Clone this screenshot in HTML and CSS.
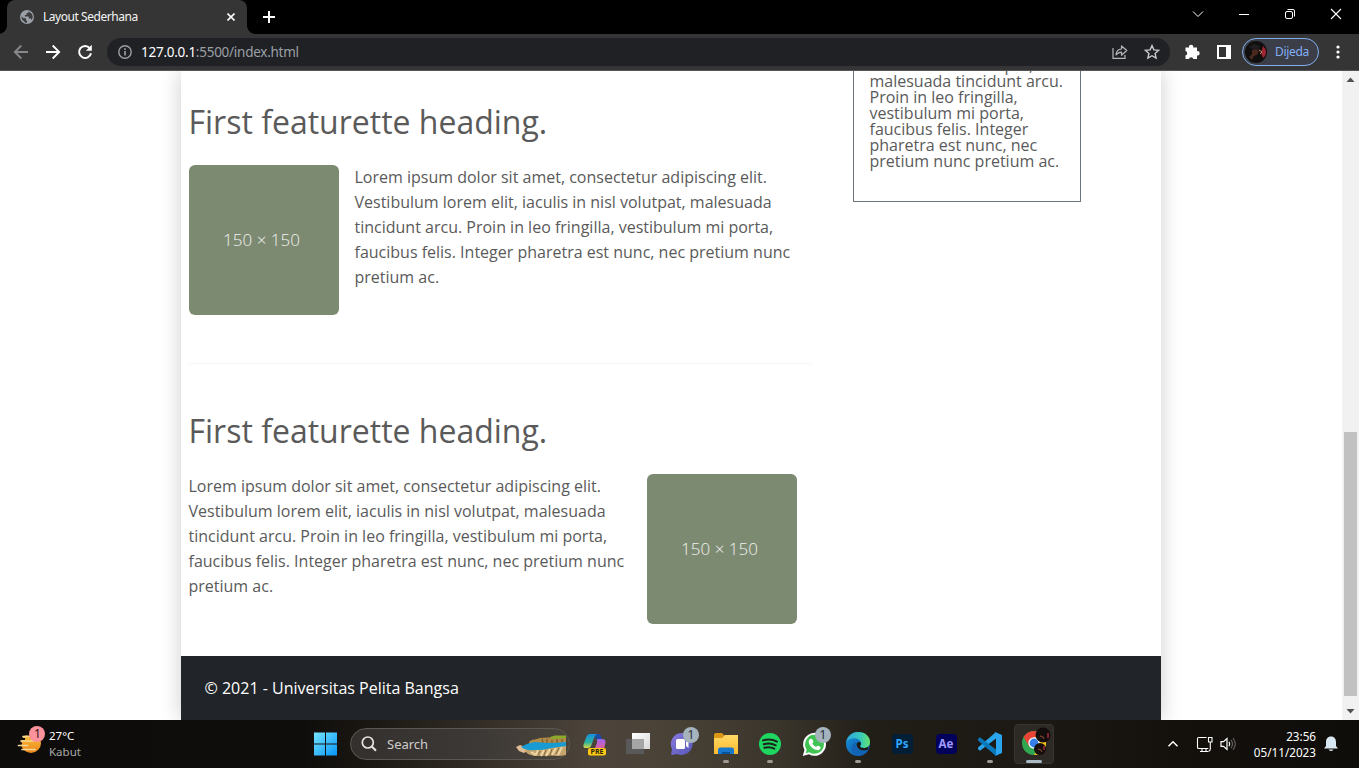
FILE: index.html
```html
<!DOCTYPE html>
<html lang="en">
<head>
<meta charset="utf-8">
<title>Layout Sederhana</title>
<link rel="stylesheet" href="styles.css">
</head>
<body>
<header class="tabstrip">
  <div class="tab">
    <svg class="globe" width="14" height="14" viewBox="0 0 14 14"><circle cx="7" cy="7" r="7" fill="#9aa0a6"/><path d="M1.300 6.200 3.500 8.200H6v2l1 .8v1.800H5.500L2 9.500zM8.500 1.300 8.300 3H6.600v1.900H4.800v1.600h4v1.900h2l1 1.500 1-2.900-.8-3z" fill="#3b3c3e"/></svg>
    <span class="tab-title">Layout Sederhana</span>
    <svg class="tab-close" width="8" height="8" viewBox="0 0 8 8"><path d="m.5.5 7 7m0-7-7 7" stroke="#fff" stroke-width="1.6"/></svg>
  </div>
  <svg class="new-tab" width="12" height="12" viewBox="0 0 12 12"><path d="M6 0v12M0 6h12" stroke="#fff" stroke-width="2"/></svg>
  <div class="window-controls">
    <svg width="12" height="12" viewBox="0 0 12 12"><path d="m1 3.5 5 5 5-5" fill="none" stroke="#fff"/></svg>
    <svg width="12" height="12" viewBox="0 0 12 12"><path d="M1 6.5h10" stroke="#fff"/></svg>
    <svg width="12" height="12" viewBox="0 0 12 12"><rect x="1.5" y="3.5" width="7" height="7" rx="1.5" fill="none" stroke="#fff"/><path d="M3.5 1.5H9A1.5 1.5 0 0 1 10.500 3v5.500" fill="none" stroke="#fff"/></svg>
    <svg width="12" height="12" viewBox="0 0 12 12"><path d="m1 1 10 10m0-10L1 11" stroke="#fff" stroke-width="1.1"/></svg>
  </div>
</header>
<nav class="toolbar">
  <div class="nav-buttons">
    <svg width="16" height="16" viewBox="0 0 16 16" fill="none" stroke="#87888a" stroke-width="1.8"><path d="M15 8H2M8.300 1.500 1.800 8l6.500 6.500"/></svg>
    <svg width="16" height="16" viewBox="0 0 16 16" fill="none" stroke="#fff" stroke-width="1.8"><path d="M1 8h13M7.700 1.500 14.200 8l-6.500 6.500"/></svg>
    <svg width="16" height="16" viewBox="0 0 16 16" fill="none" stroke="#fff" stroke-width="2"><path d="M12.800 4.100A6 6 0 1 0 14 9.200"/><path d="M14.800.8v6H8.900z" fill="#fff" stroke="none"/></svg>
  </div>
  <div class="address">
    <svg width="14" height="14" viewBox="0 0 14 14"><circle cx="7" cy="7" r="6.200" fill="none" stroke="#9aa0a6" stroke-width="1.400"/><path d="M7 6v4.500M7 3.300v1.600" stroke="#9aa0a6" stroke-width="1.600"/></svg>
    <span class="url"><b>127.0.0.1</b>:5500/index.html</span>
    <svg class="share" width="16" height="16" viewBox="0 0 16 16" fill="none" stroke="#b5b8bb" stroke-width="1.200"><path d="M1 4v10.400h12V11"/><path d="M9.500 2v3C6 5.200 4.200 7.500 4 11c1.500-2 3-2.800 5.500-2.800v3L14.800 6.500z" stroke-linejoin="round"/></svg>
    <svg width="16" height="16" viewBox="0 0 16 16"><path d="m8 1.600 1.900 4.300 4.700.5-3.500 3.100 1 4.600L8 11.700l-4.100 2.400 1-4.600-3.500-3.100 4.700-.5z" fill="none" stroke="#c7c9cc" stroke-width="1.400"/></svg>
  </div>
  <svg class="puzzle" width="16" height="16" viewBox="0 0 16 16"><path d="M1.500 3.500H5a2.200 2.200 0 1 1 4.200 0H13v3.700a2.200 2.200 0 1 1 0 4.300V15H9.300a2.200 2.200 0 0 0-4.300 0H1.500v-3.600a2.200 2.200 0 0 0 0-4.300z" fill="#fff"/></svg>
  <svg class="panel" width="14" height="14" viewBox="0 0 14 14"><path fill="#fff" fill-rule="evenodd" d="M0 0h14v14H0zM2 2v10h7V2z"/></svg>
  <div class="profile">
    <svg width="22" height="22" viewBox="0 0 22 22"><circle cx="11" cy="11" r="11" fill="#110e0e"/><path d="M18 5c3 3 4 6 2 10l-2 2-2-5z" fill="#a02534"/><path d="m7 9 4-1 3 2-2 4-3 1-2 4-3-3 3-3z" fill="#49291e"/><path d="m4 6 5-3 6 2-1 4-6-1z" fill="#201d20"/><path d="m14 9 3 2-2 2" stroke="#c78b69" fill="none"/></svg>
    <span>Dijeda</span>
  </div>
  <svg class="menu" width="4" height="16" viewBox="0 0 4 16" fill="#fff"><circle cx="2" cy="3" r="1.600"/><circle cx="2" cy="8" r="1.600"/><circle cx="2" cy="13" r="1.600"/></svg>
</nav>

<div class="viewport">
  <div class="scroll-area">
    <div class="container">
      <div class="columns">
        <main class="main">
          <article class="entry">
            <h2>First featurette heading.</h2>
            <div class="entry-body">
              <div class="thumb">150 × 150</div>
              <p>Lorem ipsum dolor sit amet, consectetur adipiscing elit.<br>Vestibulum lorem elit, iaculis in nisl volutpat, malesuada<br>tincidunt arcu. Proin in leo fringilla, vestibulum mi porta,<br>faucibus felis. Integer pharetra est nunc, nec pretium nunc<br>pretium ac.</p>
            </div>
          </article>
          <hr class="divider">
          <article class="entry">
            <h2>First featurette heading.</h2>
            <div class="entry-body reverse">
              <div class="thumb">150 × 150</div>
              <p>Lorem ipsum dolor sit amet, consectetur adipiscing elit.<br>Vestibulum lorem elit, iaculis in nisl volutpat, malesuada<br>tincidunt arcu. Proin in leo fringilla, vestibulum mi porta,<br>faucibus felis. Integer pharetra est nunc, nec pretium nunc<br>pretium ac.</p>
            </div>
          </article>
        </main>
        <aside class="widget">
          <p>iaculis in nisl volutpat,<br>malesuada tincidunt arcu.<br>Proin in leo fringilla,<br>vestibulum mi porta,<br>faucibus felis. Integer<br>pharetra est nunc, nec<br>pretium nunc pretium ac.</p>
        </aside>
      </div>
      <footer class="footer"><p>© 2021 - Universitas Pelita Bangsa</p></footer>
    </div>
  </div>
  <div class="scrollbar">
    <svg width="17" height="17" viewBox="0 0 17 17"><path d="M4.500 11 8.500 6.500l4 4.500z" fill="#505050"/></svg>
    <div class="track"><div class="thumb-bar"></div></div>
    <svg width="17" height="17" viewBox="0 0 17 17"><path d="m4.500 6 4 4.500 4-4.500z" fill="#505050"/></svg>
  </div>
</div>

<div class="taskbar">
  <div class="weather">
    <svg width="30" height="32" viewBox="0 0 30 32"><defs><linearGradient id="sun" x2="0" y2="1"><stop stop-color="#f9c33c"/><stop offset="1" stop-color="#ee851d"/></linearGradient></defs><circle cx="14" cy="18" r="10" fill="url(#sun)"/><path d="M0 6h14v4.500H0zM0 13h8v2H0zM0 17.500h5v2H0z" fill="#0d0c0b"/><path d="M6 11.500h5M4 16h12M1.500 20.500h9M5 24.500h13" stroke="#f3d994" stroke-width="1.700" stroke-linecap="round"/><circle cx="20" cy="9" r="8" fill="#fb929c"/></svg>
    <span class="weather-count">1</span>
    <div class="weather-text"><span>27°C</span><span class="muted">Kabut</span></div>
  </div>

  <div class="apps">
    <div class="slot"><svg width="24" height="24" viewBox="0 0 24 24"><defs><linearGradient id="win" x2="1" y2="1"><stop stop-color="#75e5ff"/><stop offset="1" stop-color="#0795fb"/></linearGradient></defs><path fill="url(#win)" d="M1 .500h11v11H1zM13 .500h11v11H13zM1 12.500h11v11H1zM13 12.500h11v11H13z"/></svg></div>
    <div class="search">
      <svg width="16" height="16" viewBox="0 0 16 16" fill="none" stroke="#e6e4e2" stroke-width="1.700"><circle cx="6.800" cy="6.500" r="5.500"/><path d="m10.800 10.500 4.200 4.300" stroke-width="2"/></svg>
      <span>Search</span>
      <svg class="doodle" width="52" height="22" viewBox="0 0 52 22"><path d="M13 7q2-3 6-2.500L24 3l8-.5L50 2v9H13z" fill="#b08a48"/><path d="m34 2 5-1.500h11V3L36 4z" fill="#8cab2b"/><path d="m26 4 1 4m4-4v4m5-3v3m5-4v4m5-4v3" stroke="#7c5d2c" stroke-width="1.300"/><path d="m0 12 4-2 5 2 4 3-5 3-5-2z" fill="#e0bd97"/><path d="M8 15 30 12l20-2v10q-8 1.500-14 .5l-18 .5-6-2z" fill="#c5a56c"/><path d="M5 12q6-4 14-5 10 1 18 1l13-1v4l-14 2q-12 3-24 2-5-1-7-3" fill="#189bd3"/><path d="m15 17 5 3m2-5-2 5m8-5-3 6m9-7-4 7m10-8-4 7m10-8-4 8" stroke="#edd6a5" stroke-width="2"/><path d="m24 16-2 4m8-5-2 5m8-6-2 6m9-7-3 6" stroke="#846a42"/></svg>
    </div>
    <div class="slot"><svg width="24" height="24" viewBox="0 0 24 24"><defs><linearGradient id="cpa" x2="0" y2="1"><stop stop-color="#168fe5"/><stop offset=".6" stop-color="#2db39b"/><stop offset="1" stop-color="#dbdd42"/></linearGradient><linearGradient id="cpb" x2="0" y2="1"><stop stop-color="#9c66ed"/><stop offset="1" stop-color="#fb5e83"/></linearGradient></defs><path d="M15 7h5c4 0 4 3 3 6l-2 7H9l2-4h2l2-5z" fill="url(#cpb)"/><path d="M12 2h4c3 0 3 3 4 5h-5c-2 0-2-4-3-5" fill="#174da9"/><path d="M8 2h7q-2 1-3 4l-3 8q-1 2-3 2H4c-3 0-3-2-2-5l2-5c1-3 2-4 4-4" fill="url(#cpa)"/><rect x="6" y="16" width="18" height="7.500" rx="2" fill="#ffc914"/><text x="15" y="22.300" class="pre">PRE</text></svg></div>
    <div class="slot"><svg width="26" height="24" viewBox="0 0 26 24"><defs><linearGradient id="tv" x2="1" y2="1"><stop stop-color="#fff"/><stop offset="1" stop-color="#d7d7d7"/></linearGradient></defs><path d="M1 7h18v15H1z" fill="#595959"/><path d="M7 1h18v16H7z" fill="url(#tv)"/><path d="M7 7h12v10H7z" fill="#a5a5a5"/></svg></div>
    <div class="slot"><svg width="24" height="24" viewBox="0 0 24 24"><defs><linearGradient id="chat" x2="1" y2="1"><stop stop-color="#8b79df"/><stop offset="1" stop-color="#5558b7"/></linearGradient></defs><path d="M12 1a11 11 0 1 1-5 21l-5 1q-1 0-.700-1.500L2 17A11 11 0 0 1 12 1" fill="url(#chat)"/><rect x="6" y="7" width="9" height="10" rx="1.500" fill="#fff"/><path d="m16 10 2.500-2v8L16 14z" fill="#fff"/></svg><span class="badge">1</span></div>
    <div class="slot"><svg width="26" height="24" viewBox="0 0 26 24"><defs><linearGradient id="fold" x2="0" y2="1"><stop stop-color="#ffda67"/><stop offset="1" stop-color="#fcb92c"/></linearGradient></defs><path d="M1 3q0-2 2-2h6l3 3h12v6H1z" fill="#da9716"/><path d="M1 6h8l3-3h13v19H1z" fill="url(#fold)"/><path d="M5 22v-4q0-2.500 2.500-2.500h11q2.500 0 2.500 2.500v4z" fill="#1677cc"/><path d="M9 20h8v2H9z" fill="#075398"/></svg><i class="running"></i></div>
    <div class="slot"><svg width="24" height="24" viewBox="0 0 24 24"><circle cx="12" cy="12" r="11" fill="#1ed760"/><path d="M5 8.400q7.500-2.400 14 1.200M5.700 12.200q6.500-1.900 12 1.100M6.300 15.700q5.500-1.500 10 1" fill="none" stroke="#1c231b" stroke-width="2" stroke-linecap="round"/></svg><i class="running"></i></div>
    <div class="slot"><svg width="25" height="25" viewBox="0 0 25 25"><path d="M12.500.8a11.500 11.500 0 0 1 0 23q-3 0-5.500-1.500L.7 24l1.800-6A11.600 11.600 0 0 1 12.500.8" fill="#fff"/><path d="M12.500 2.800a9.500 9.500 0 0 1 0 19q-3 0-5.200-1.500l-3.700 1 1.100-3.600A9.600 9.600 0 0 1 12.500 2.800" fill="#3fc351"/><path d="m8.500 6.800 1.700.3 1.300 3-1.200 1.500q1.300 2.300 3.800 3.300l1.500-1.500 3 1.500q0 3-3 3.300C11 18 6.500 13 6.700 9.300q.2-1.700 1.800-2.500" fill="#fff"/></svg><span class="badge">1</span></div>
    <div class="slot"><svg width="24" height="24" viewBox="0 0 24 24"><defs><linearGradient id="edgeTop"><stop stop-color="#2ea6df"/><stop offset=".6" stop-color="#37c9bc"/><stop offset="1" stop-color="#66e26c"/></linearGradient><linearGradient id="edgeLow" x2="1" y2="1"><stop stop-color="#1595dd"/><stop offset="1" stop-color="#0d4c9b"/></linearGradient></defs><circle cx="12" cy="12" r="12" fill="url(#edgeLow)"/><path d="M.2 10C2 3 7 0 12 0c8 0 12 5 12 10 0 4-3 6-6 6-2.500 0-4-.7-4-2q1.500-1 1.200-3C14 5 4 4.500.2 10" fill="url(#edgeTop)"/><path d="M9.500 12c0 6 6 8.500 12.500 6-3 5-8 7-12.500 5.500C4 20 4.500 12 9.500 9.700q-.2 1 0 2.300" fill="#1263b4"/><path d="M14.800 10.500q.5 2-.8 3.500c0 2 4.500 3 8.500.5L22 17.500c-5 2-11.300 0-11.400-5 .1-2 2-3.500 4.200-2" fill="#1d1914"/></svg><i class="running"></i></div>
    <div class="slot"><span class="adobe ps">Ps</span></div>
    <div class="slot"><span class="adobe ae">Ae</span></div>
    <div class="slot"><svg width="24" height="24" viewBox="0 0 24 24"><path d="M18 0 0 15.500v1.700l2 1.500L18 6.500z" fill="#28a5ec"/><path d="M18 24 0 8.500V6.800l2-1.500 16 12.200z" fill="#0877b9"/><path d="m17 0 7 3v18l-7 3q1.300-.8 1-2V2z" fill="#2ba4ef"/></svg><i class="running"></i></div>
    <div class="slot"><div class="active-app"><svg width="30" height="32" viewBox="0 0 30 32"><circle cx="12" cy="17" r="12" fill="#30a852"/><path d="M1.600 11A12 12 0 0 1 22.400 11L12 17 6.800 20z" fill="#e94335"/><path d="M22.400 11A12 12 0 0 1 12 29l5-9-5-9z" fill="#fbc118"/><circle cx="12" cy="17" r="5.700" fill="#fff"/><circle cx="12" cy="17" r="4.400" fill="#367fe8"/><circle cx="21" cy="9" r="7.500" fill="#120c0c"/><circle cx="18" cy="23" r="6" fill="#160d0c"/><path d="m18 10 3 1 1 2m-6 10 3 1 1 2" stroke="#6a3b2b" fill="none" stroke-width="1.500"/><path d="M26 7v5m-4 8v4" stroke="#a12b35" stroke-width="1.500"/></svg></div><i class="running wide"></i></div>
  </div>

  <div class="tray">
    <svg width="12" height="12" viewBox="0 0 12 12"><path d="m1.500 8.300 4.500-4.500 4.500 4.500" fill="none" stroke="#fff" stroke-width="1.500"/></svg>
    <svg class="network" width="17" height="17" viewBox="0 0 17 17" fill="none" stroke="#fff" stroke-width="1.100"><path d="M10.500 1.500H2.800q-1.300 0-1.300 1.300v8.400q0 1.300 1.300 1.300h9.500M6 12.500v3m4-3v3m-6 0h8M12.500 1.500h3.500v4.500h-3.500zM14.300 6v7q0 2-2 2.500"/></svg>
    <svg class="volume" width="17" height="16" viewBox="0 0 17 16" fill="none" stroke="#fff" stroke-width="1.200"><path d="M1 5.700h2.500L7 2.500v11l-3.500-3.200H1zM9 5.800q1.400 2.200 0 4.400"/><path d="M11 3.800q3 4.200 0 8.400M13 2q4.500 6 0 12" stroke="#625f5c"/></svg>
    <div class="clock"><span>23:56</span><span>05/11/2023</span></div>
    <svg class="bell" width="14" height="16" viewBox="0 0 14 16" fill="#d9e8f0"><path d="M7 .5c3.500 0 5 2.500 5 5.500v4l2 2.500H0L2 10V6C2 3 3.500.5 7 .5M4.500 13.500h5q-2.500 3-5 0"/></svg>
  </div>
</div>
</body>
</html>
```
FILE: styles.css
```css
* { box-sizing: border-box; }
body {
  margin: 0;
  width: 1359px;
  height: 768px;
  overflow: hidden;
  display: flex;
  flex-direction: column;
  background: #fff;
  font-family: "Open Sans", sans-serif;
}
svg { display: block; flex: none; }
p, h2 { margin: 0; }

/* Browser chrome */
.tabstrip { height: 34px; background: #000; display: flex; align-items: flex-start; padding-left: 7px; font-family: "Noto Sans", sans-serif; }
.tab {
  width: 240px; height: 34px;
  display: flex; align-items: center;
  padding: 0 12px 0 13px;
  background: #353535;
  border-radius: 8px 8px 0 0;
  color: #f4f4f4;
  position: relative;
}
.tab::before, .tab::after { content: ""; position: absolute; bottom: 0; width: 8px; height: 8px; }
.tab::before { left: -8px; background: radial-gradient(circle at 0 0, #000 7.5px, #353535 8px); }
.tab::after { right: -8px; background: radial-gradient(circle at 100% 0, #000 7.5px, #353535 8px); }
.tab-title { margin: -1px 0 0 9px; font-size: 12px; letter-spacing: -.45px; white-space: nowrap; }
.tab-close { margin-left: auto; }
.new-tab { margin: 11px 0 0 16px; }
.window-controls { margin: 8px 17px 0 auto; display: flex; gap: 34px; }

.toolbar { height: 37px; flex: none; background: #353535; border-bottom: 1px solid #555; display: flex; align-items: center; padding-left: 13px; }
.nav-buttons { display: flex; gap: 16px; }
.address { width: 1063px; height: 28px; margin-left: 14px; border-radius: 14px; background: #202124; display: flex; align-items: center; padding: 0 10px 0 11px; }
.url { margin: 0 0 0 9px; color: #9aa0a6; font: 13.5px "Noto Sans", sans-serif; letter-spacing: -.26px; white-space: nowrap; }
.url b { color: #fff; font-weight: 400; }
.share { margin: 0 16px 0 auto; }
.puzzle { margin-left: 14px; }
.panel { margin-left: 17px; }
.profile { width: 77px; height: 28px; margin-left: 11px; border: 1px solid #83aff0; border-radius: 14px; background: #3b3e46; display: flex; align-items: center; padding-left: 2px; color: #83aff8; font: 12px "Noto Sans", sans-serif; letter-spacing: -.3px; }
.profile span { margin: -1px 0 0 8px; }
.menu { margin-left: 16.5px; }

/* Web page */
.viewport { height: 649px; flex: none; display: flex; overflow: hidden; }
.scroll-area { flex: 1; overflow: hidden; }
.container { width: 980px; height: 649px; margin: 0 auto; box-shadow: 0 0 20px rgba(0, 0, 0, .2); display: flex; flex-direction: column; color: #5a5a5a; }
.columns { flex: 1; display: flex; align-items: flex-start; }
.main { width: 622px; margin-left: 8px; padding-top: 30px; }
.entry h2 { margin: 0 0 23px -.5px; font-size: 32px; font-weight: 400; line-height: 41px; height: 41px; white-space: nowrap; }
.entry-body { display: flex; gap: 16px; height: 150px; }
.entry-body p { margin-left: -.5px; font-size: 16px; line-height: 25px; white-space: nowrap; }
.entry-body.reverse { flex-direction: row-reverse; justify-content: space-between; padding-right: 14px; }
.thumb { width: 150px; height: 150px; flex: none; border-radius: 6px; background: #7d8a72; color: #f0f1ee; display: grid; place-items: center; padding: 0 5px 2px 0; font-size: 17px; font-weight: 300; }
.divider { height: 1px; margin: 48px 0 46px; border: 0; background: #f4f4f4; }
.widget { width: 228px; height: 145px; margin: -14px 0 0 42px; padding-left: 15.5px; border: 1px solid #6c757d; border-top: 0; font-size: 16px; line-height: 16px; white-space: nowrap; }
.footer { height: 64px; flex: none; background: #212529; color: #fff; padding: 20px 23.5px; font-size: 16px; line-height: 25px; }
.scrollbar { width: 17px; background: #f1f1f1; display: flex; flex-direction: column; }
.track { flex: 1; padding: 344px 2px 0; }
.thumb-bar { height: 264px; background: #c1c1c1; }

/* Taskbar */
.taskbar { height: 48px; flex: none; display: flex; color: #fff; font: 12px "Noto Sans", sans-serif; background: linear-gradient(90deg, #0d0c0b 0, #0f0d0b 300px, #1a1712 370px, #4c443b 590px, #4b4338 650px, #3a352b 780px, #211e18 870px, #1b1813 1050px, #13100c 1200px, #0f0d0a); }
.weather { width: 303px; display: flex; padding: 5px 0 0 17px; position: relative; }
.weather-count { position: absolute; left: 34px; top: 6px; font-size: 12px; line-height: 16px; color: #2d1518; }
.weather-text { display: flex; flex-direction: column; margin: 3px 0 0 2px; line-height: 16px; font-size: 11.5px; }
.muted { color: #aaa7a5; }
.apps { display: flex; align-items: center; }
.slot { width: 44px; height: 48px; display: grid; place-items: center; position: relative; flex: none; }
.search { width: 220px; height: 32px; margin: 0 2px 0 3px; border: 1px solid #5c5752; border-radius: 16px; background: linear-gradient(90deg, #34302e, #3d3936 60%, #4a443b); display: flex; align-items: center; padding: 0 1px 0 10px; font-size: 13px; color: #d0cdca; }
.search span { margin-left: 10px; }
.doodle { margin: 3px 0 0 auto; }
.pre { font: 700 7px "Open Sans", sans-serif; text-anchor: middle; fill: #29230c; }
.badge { position: absolute; right: 5px; top: 7px; width: 16px; height: 16px; border-radius: 50%; background: #a5b3bd; color: #292d31; text-align: center; font-size: 12px; line-height: 16px; }
.running { position: absolute; left: 19px; bottom: 5px; width: 6px; height: 3px; border-radius: 2px; background: #9d9993; }
.running.wide { left: 14px; width: 16px; background: #a8bac5; }
.adobe { width: 21px; height: 20px; border-radius: 4px; text-align: center; font: 700 11.5px/20px "Noto Sans", sans-serif; }
.ps { background: #001e36; color: #31a8ff; }
.ae { background: #00005b; color: #a19aff; }
.active-app { width: 40px; height: 40px; border: 1px solid #38332e; border-radius: 4px; background: #2d2924; padding: 1px 0 0 7px; }
.tray { margin-left: auto; display: flex; align-items: center; padding-right: 21px; }
.network { margin-left: 17px; }
.volume { margin-left: 7px; }
.clock { width: 79px; display: flex; flex-direction: column; text-align: right; font-size: 11.7px; line-height: 16px; }
.bell { margin-left: 8px; }
```
